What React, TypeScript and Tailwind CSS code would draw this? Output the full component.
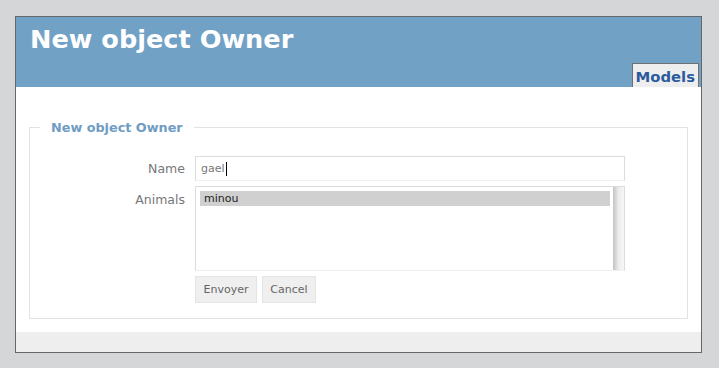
const font = { fontFamily: '"DejaVu Sans", Verdana, sans-serif' };

export default function App() {
  return (
    <div className="min-h-[368px] w-[719px] bg-[#d5d6d8] pl-[15px] pt-[16px]" style={font}>
      <div className="flex w-[687px] flex-col border border-[#666666] bg-white">
        <header className="flex h-[70px] flex-col bg-[#72a1c6] pl-[14px] pt-[7px]">
          <h1 className="text-[25.6px] font-bold leading-[30px] text-white">New object Owner</h1>
          <div className="mt-auto flex justify-end pr-[2px]">
            <a className="h-[24px] border border-b-0 border-[#707070] bg-[#eeeeee] px-[3px] pt-[3px] text-[14.8px] font-bold leading-[20px] text-[#2b5b9c]">
              Models
            </a>
          </div>
        </header>

        <main className="px-[13px] pb-[13px] pt-[31px]">
          <fieldset className="border border-[#e2e2e2] px-0 pb-[15px]">
            <legend className="ml-[10px] px-[11px] pt-[2px] text-[12.8px] font-bold leading-[16px] text-[#6f9cc3]">
              New object Owner
            </legend>

            <div className="grid grid-cols-[155px_430px] gap-x-[10px] gap-y-[5px] pt-[20px]">
              <label className="self-center text-right text-[12.5px] leading-[25px] text-[#777777]">Name</label>
              <div className="flex h-[25px] items-center border border-[#dcdcdc] border-b-[#f0f0f0] pl-[5px] pt-[1px] text-[11px] text-[#777777]">
                gael
                <span className="ml-[1px] inline-block h-[14px] w-px bg-black" />
              </div>

              <label className="pt-[6px] text-right text-[12.5px] leading-[16px] text-[#777777]">Animals</label>
              <div className="flex h-[85px] border border-[#dcdcdc] border-b-[#f0f0f0]">
                <div className="flex-1 pl-[4px] pr-[3px] pt-[4px]">
                  <div className="h-[15px] bg-[#d0d0d0] pl-[4px] text-[11px] leading-[15px] text-[#222222]">minou</div>
                </div>
                <div className="w-[11px] bg-gradient-to-r from-[#c2c2c2] via-[#ececec] to-[#f7f7f7]" />
              </div>

              <div />
              <div className="flex gap-[5px]">
                <button className="h-[27px] w-[62px] border border-[#e4e4e4] bg-[#efefef] pt-[1px] text-[11px] text-[#666666]">
                  Envoyer
                </button>
                <button className="h-[27px] w-[54px] border border-[#e4e4e4] bg-[#efefef] pt-[1px] text-[11px] text-[#666666]">
                  Cancel
                </button>
              </div>
            </div>
          </fieldset>
        </main>

        <footer className="h-[20px] bg-[#eeeeee]" />
      </div>
    </div>
  );
}
